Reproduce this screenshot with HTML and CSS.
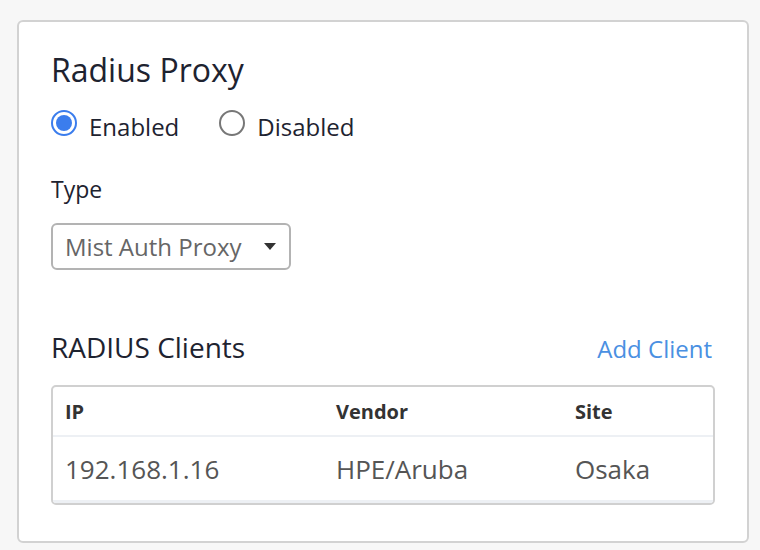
FILE: index.html
```html
<!DOCTYPE html>
<html lang="en">
<head>
    <meta charset="UTF-8">
    <meta name="viewport" content="width=device-width, initial-scale=1.0">
    <title>Radius Proxy</title>
    <link rel="stylesheet" href="styles.css">
</head>
<body>
    <div class="card">
        <h1>Radius Proxy</h1>
        <div class="radio-group">
            <label class="radio checked"><span class="dot"></span>Enabled</label>
            <label class="radio"><span class="dot"></span>Disabled</label>
        </div>

        <div class="field">
            <div class="field-label">Type</div>
            <div class="select">
                <span>Mist Auth Proxy</span>
                <span class="caret"></span>
            </div>
        </div>

        <div class="section-head">
            <h2>RADIUS Clients</h2>
            <a class="link" href="#">Add Client</a>
        </div>

        <div class="table-wrap">
            <table>
                <thead>
                    <tr>
                        <th class="col-ip">IP</th>
                        <th class="col-vendor">Vendor</th>
                        <th>Site</th>
                    </tr>
                </thead>
                <tbody>
                    <tr>
                        <td>192.168.1.16</td>
                        <td>HPE/Aruba</td>
                        <td>Osaka</td>
                    </tr>
                </tbody>
            </table>
        </div>
    </div>
</body>
</html>
```

FILE: styles.css
```css
body {
    font-family: 'Open Sans', 'Noto Sans', sans-serif;
    margin: 0;
    padding: 20px 11px 7px 17px;
    background-color: #f7f7f7;
    color: #1e2330;
}

.card {
    background: #fff;
    border: 2px solid #d2d2d2;
    border-radius: 6px;
    height: 523px;
    box-sizing: border-box;
    padding: 26px 32px 0 32px;
}

h1 {
    font-size: 32px;
    font-weight: 400;
    line-height: 44px;
    margin: 0;
}

.radio-group {
    display: flex;
    gap: 40px;
    margin-top: 18px;
}

.radio {
    display: flex;
    align-items: flex-start;
    font-size: 24px;
    line-height: 34px;
}

.radio .dot {
    width: 26px;
    height: 26px;
    box-sizing: border-box;
    border: 2px solid #777;
    border-radius: 50%;
    margin-right: 12px;
    position: relative;
}

.radio.checked .dot {
    border-color: #3b7ded;
}

.radio.checked .dot::after {
    content: '';
    position: absolute;
    top: 3px;
    left: 3px;
    width: 16px;
    height: 16px;
    border-radius: 50%;
    background: #3b7ded;
}

.field {
    margin-top: 30px;
}

.field-label {
    font-size: 23px;
    line-height: 30px;
}

.select {
    display: flex;
    align-items: center;
    justify-content: space-between;
    width: 240px;
    height: 47px;
    box-sizing: border-box;
    margin-top: 19px;
    padding: 0 13px 0 12px;
    border: 2px solid #b3b3b3;
    border-radius: 6px;
    font-size: 24px;
    color: #666;
}

.caret {
    width: 0;
    height: 0;
    border-left: 6px solid transparent;
    border-right: 6px solid transparent;
    border-top: 7px solid #333;
}

.section-head {
    display: flex;
    justify-content: space-between;
    align-items: baseline;
    margin-top: 57px;
}

h2 {
    font-size: 28px;
    font-weight: 400;
    line-height: 40px;
    margin: 0;
}

.link {
    color: #4a90e2;
    text-decoration: none;
    font-size: 24px;
    margin-right: 3px;
}

.table-wrap {
    margin-top: 18px;
    border: 2px solid #d0d0d0;
    border-radius: 5px;
    overflow: hidden;
}

table {
    width: 100%;
    border-collapse: collapse;
}

th, td {
    text-align: left;
    padding: 0 12px;
}

th {
    font-size: 20px;
    font-weight: 700;
    color: #333;
    height: 48px;
    border-bottom: 2px solid #edf0f4;
}

td {
    font-size: 26px;
    color: #555;
    height: 63px;
    border-bottom: 3px solid #edf0f4;
}

.col-ip {
    width: 247px;
}

.col-vendor {
    width: 215px;
}
```
